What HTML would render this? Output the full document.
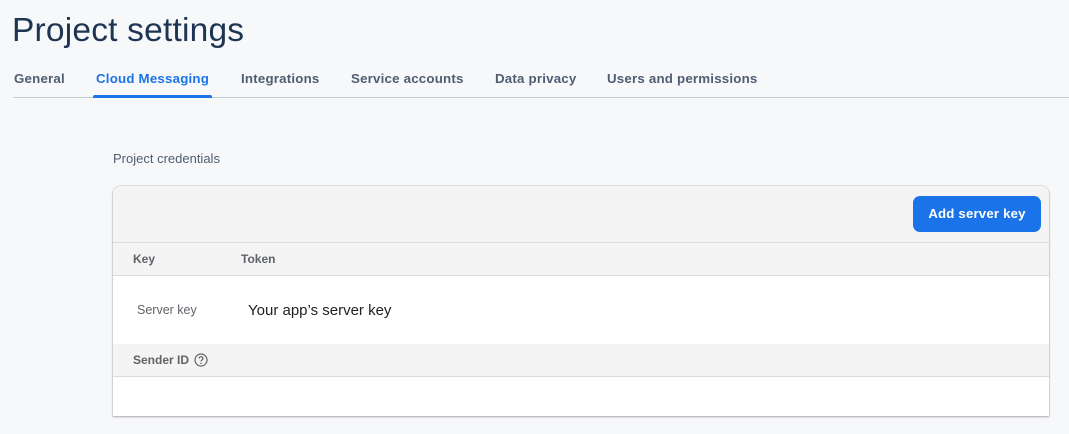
<!DOCTYPE html>
<html><head><style>
body{margin:0;width:1069px;height:434px;background:#f7f8fa;font-family:"Liberation Sans",Arial,sans-serif;position:relative;overflow:hidden}
.a{position:absolute;white-space:nowrap}
h1{position:absolute;left:12px;top:12px;margin:0;font-size:33.5px;font-weight:normal;color:#1d3553;letter-spacing:0.2px}
.tab{position:absolute;top:71px;font-size:13.3px;font-weight:bold;color:#4f5d72;letter-spacing:0.2px}
.card{position:absolute;left:113px;top:186px;width:936px;height:230px;background:#fff;border-radius:8px 8px 0 0;box-shadow:0 1px 2px rgba(0,0,0,.25),0 0 0 1px #e6e6e6;overflow:hidden}
</style></head><body>
<h1>Project settings</h1>
<div class="tab" style="left:14px">General</div>
<div class="tab" style="left:96px;color:#1a73e8">Cloud Messaging</div>
<div class="tab" style="left:241px">Integrations</div>
<div class="tab" style="left:351px">Service accounts</div>
<div class="tab" style="left:495px">Data privacy</div>
<div class="tab" style="left:607px">Users and permissions</div>
<div class="a" style="left:13px;top:97px;width:1056px;height:1px;background:#c4ccd6"></div>
<div class="a" style="left:93px;top:95px;width:119px;height:3px;background:#1a73e8;border-radius:2px 2px 0 0"></div>
<div class="a" style="left:113px;top:151px;font-size:13px;color:#4f5d72">Project credentials</div>
<div class="card">
 <div class="a" style="left:0;top:0;width:936px;height:56px;background:#f4f4f4;border-bottom:1px solid #dcdcdc"></div>
 <div class="a" style="left:800px;top:10px;width:128px;height:36px;background:#1a73e8;border-radius:7px;color:#fff;font-size:13.2px;font-weight:bold;line-height:36px;text-align:center;letter-spacing:0.2px">Add server key</div>
 <div class="a" style="left:0;top:57px;width:936px;height:32px;background:#f4f4f4;border-bottom:1px solid #dcdcdc"></div>
 <div class="a" style="left:20px;top:66px;font-size:12px;font-weight:bold;color:#5f6368">Key</div>
 <div class="a" style="left:128px;top:66px;font-size:12px;font-weight:bold;color:#5f6368">Token</div>
 <div class="a" style="left:24px;top:117px;font-size:12.5px;color:#5f6368">Server key</div>
 <div class="a" style="left:135px;top:116px;font-size:15px;color:#202124">Your app’s server key</div>
 <div class="a" style="left:0;top:158px;width:936px;height:32px;background:#f4f4f4;border-bottom:1px solid #dcdcdc"></div>
 <div class="a" style="left:20px;top:167px;font-size:12px;font-weight:bold;color:#5f6368">Sender ID</div>
 <svg class="a" style="left:81px;top:167px" width="14" height="14" viewBox="0 0 14 14"><circle cx="7" cy="7" r="6" fill="none" stroke="#5f6368" stroke-width="1.2"/><path d="M5.2 5.5a1.8 1.8 0 1 1 2.6 1.6c-.6.3-.8.6-.8 1.3" fill="none" stroke="#5f6368" stroke-width="1.2"/><circle cx="7" cy="10.3" r=".75" fill="#5f6368"/></svg>
</div>
</body></html>
